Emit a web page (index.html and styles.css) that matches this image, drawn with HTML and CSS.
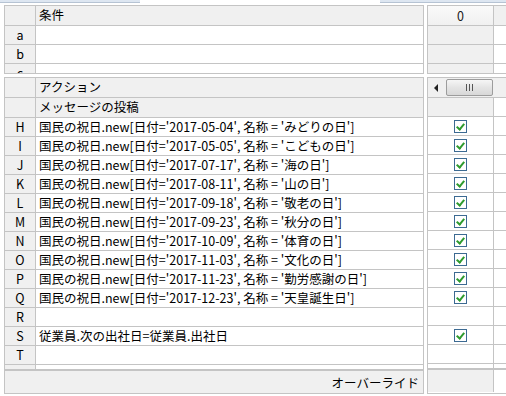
FILE: index.html
```html
<!DOCTYPE html>
<html lang="ja">

<head>
    <meta charset="UTF-8">
    <title>デシジョンテーブル</title>
    <link rel="stylesheet" href="styles.css">
</head>

<body>
    <div class="tabstrip">
        <div class="tab-left"></div>
        <div class="tab-gap"></div>
        <div class="tab-right"></div>
    </div>

    <div class="sheet">
        <!-- 条件 -->
        <div class="pane upper left">
            <div class="row head"><div class="key"></div><div class="cell">条件</div></div>
            <div class="row"><div class="key">a</div><div class="cell"></div></div>
            <div class="row"><div class="key">b</div><div class="cell"></div></div>
            <div class="row"><div class="key">c</div><div class="cell"></div></div>
        </div>
        <div class="pane upper right">
            <div class="row head"><div class="col num">0</div><div class="rest"></div></div>
            <div class="row"><div class="col grey"></div><div class="rest"></div></div>
            <div class="row"><div class="col grey"></div><div class="rest"></div></div>
            <div class="row"><div class="col grey"></div><div class="rest"></div></div>
        </div>

        <!-- アクション -->
        <div class="pane lower left">
            <div class="row head"><div class="key"></div><div class="cell">アクション</div></div>
            <div class="row head"><div class="key"></div><div class="cell">メッセージの投稿</div></div>
            <div class="row"><div class="key">H</div><div class="cell">国民の祝日.new[日付='2017-05-04', 名称 = 'みどりの日']</div></div>
            <div class="row"><div class="key">I</div><div class="cell">国民の祝日.new[日付='2017-05-05', 名称 = 'こどもの日']</div></div>
            <div class="row"><div class="key">J</div><div class="cell">国民の祝日.new[日付='2017-07-17', 名称 = '海の日']</div></div>
            <div class="row"><div class="key">K</div><div class="cell">国民の祝日.new[日付='2017-08-11', 名称 = '山の日']</div></div>
            <div class="row"><div class="key">L</div><div class="cell">国民の祝日.new[日付='2017-09-18', 名称 = '敬老の日']</div></div>
            <div class="row"><div class="key">M</div><div class="cell">国民の祝日.new[日付='2017-09-23', 名称 = '秋分の日']</div></div>
            <div class="row"><div class="key">N</div><div class="cell">国民の祝日.new[日付='2017-10-09', 名称 = '体育の日']</div></div>
            <div class="row"><div class="key">O</div><div class="cell">国民の祝日.new[日付='2017-11-03', 名称 = '文化の日']</div></div>
            <div class="row"><div class="key">P</div><div class="cell">国民の祝日.new[日付='2017-11-23', 名称 = '勤労感謝の日']</div></div>
            <div class="row"><div class="key">Q</div><div class="cell">国民の祝日.new[日付='2017-12-23', 名称 = '天皇誕生日']</div></div>
            <div class="row"><div class="key">R</div><div class="cell"></div></div>
            <div class="row"><div class="key">S</div><div class="cell">従業員.次の出社日=従業員.出社日</div></div>
            <div class="row"><div class="key">T</div><div class="cell"></div></div>
            <div class="row stub"><div class="key"></div><div class="cell"></div></div>
            <div class="footer">オーバーライド</div>
        </div>
        <div class="pane lower right">
            <div class="row scroll">
                <span class="arrow"></span>
                <span class="thumb"><span class="grip"></span></span>
            </div>
            <div class="row"><div class="col grey"></div><div class="rest"></div></div>
            <div class="row"><div class="col"><span class="check"></span></div><div class="rest"></div></div>
            <div class="row"><div class="col"><span class="check"></span></div><div class="rest"></div></div>
            <div class="row"><div class="col"><span class="check"></span></div><div class="rest"></div></div>
            <div class="row"><div class="col"><span class="check"></span></div><div class="rest"></div></div>
            <div class="row"><div class="col"><span class="check"></span></div><div class="rest"></div></div>
            <div class="row"><div class="col"><span class="check"></span></div><div class="rest"></div></div>
            <div class="row"><div class="col"><span class="check"></span></div><div class="rest"></div></div>
            <div class="row"><div class="col"><span class="check"></span></div><div class="rest"></div></div>
            <div class="row"><div class="col"><span class="check"></span></div><div class="rest"></div></div>
            <div class="row"><div class="col"><span class="check"></span></div><div class="rest"></div></div>
            <div class="row"><div class="col"></div><div class="rest"></div></div>
            <div class="row"><div class="col"><span class="check"></span></div><div class="rest"></div></div>
            <div class="row"><div class="col"></div><div class="rest"></div></div>
            <div class="row stub"><div class="col"></div><div class="rest"></div></div>
            <div class="row foot"><div class="col grey"></div><div class="rest"></div></div>
        </div>
    </div>
</body>

</html>
```

FILE: styles.css
```css
body {
    margin: 0;
    padding: 0;
    background-color: #fff;
    font-family: "Noto Sans CJK JP", "Noto Sans", sans-serif;
    font-size: 12.5px;
    color: #000;
    width: 506px;
    height: 396px;
    overflow: hidden;
}

/* thin tab strip along the top edge */
.tabstrip {
    display: flex;
    height: 3px;
    margin-bottom: 2px;
}

.tab-left {
    width: 140px;
    background-color: #dde6f1;
    border-bottom: 1px solid #b6c3d3;
    box-sizing: border-box;
}

.tab-gap {
    flex: 1;
}

.tab-right {
    width: 126px;
    background-color: #dde6f1;
    border-bottom: 1px solid #b6c3d3;
    box-sizing: border-box;
}

.sheet {
    display: grid;
    grid-template-columns: 420px 79px;
    grid-template-rows: 69px 317px;
    column-gap: 3px;
    row-gap: 3px;
    padding-left: 4px;
}

.pane {
    border: 1px solid #c4c4c4;
    overflow: hidden;
    box-sizing: border-box;
}

.pane.right {
    border-right: none;
}

.row {
    display: flex;
    height: 19px;
    border-bottom: 1px solid #c4c4c4;
    box-sizing: border-box;
}

.row.head {
    height: 20px;
    background-color: #f0f0f0;
}

.row.stub {
    height: 5px;
}

.key {
    width: 30px;
    flex-shrink: 0;
    border-right: 1px solid #c4c4c4;
    background-color: #f0f0f0;
    text-align: center;
    line-height: 18px;
}

.cell {
    flex: 1;
    padding-left: 3px;
    line-height: 18px;
    white-space: nowrap;
}

.footer {
    height: 23px;
    border-top: 1px solid #c4c4c4;
    background-color: #f0f0f0;
    text-align: right;
    padding-right: 4px;
    line-height: 23px;
}

/* right side: the single rule column */
.col {
    width: 65px;
    flex-shrink: 0;
    border-right: 1px solid #c4c4c4;
    display: flex;
    justify-content: center;
    align-items: center;
}

.col.grey {
    background-color: #f0f0f0;
}

.col.num {
    background: linear-gradient(#fafafa, #f0f0f0);
    color: #1a1a1a;
}

.rest {
    flex: 1;
}

.row.foot {
    height: 23px;
    border-top: 1px solid #c4c4c4;
    border-bottom: none;
}

/* horizontal scrollbar */
.row.scroll {
    height: 20px;
    background-color: #f0f0f0;
    align-items: center;
    padding-left: 6px;
}

.arrow {
    width: 0;
    height: 0;
    border-top: 4px solid transparent;
    border-bottom: 4px solid transparent;
    border-right: 4px solid #222;
}

.thumb {
    margin-left: 8px;
    width: 47px;
    height: 17px;
    box-sizing: border-box;
    border: 1px solid #9c9c9c;
    border-radius: 2px;
    background: linear-gradient(#f6f6f6, #e4e4e4 50%, #d8d8d8);
    display: flex;
    justify-content: center;
    align-items: center;
}

.grip {
    width: 7px;
    height: 7px;
    background: linear-gradient(90deg, #555 1px, transparent 1px, transparent 3px, #555 3px, #555 4px, transparent 4px, transparent 6px, #555 6px);
}

/* checked checkbox */
.check {
    width: 13px;
    height: 13px;
    box-sizing: border-box;
    border: 1px solid #3c6a92;
    background-color: #fff;
    position: relative;
}

.check::after {
    content: "";
    position: absolute;
    left: 3px;
    top: 1px;
    width: 3px;
    height: 6px;
    border-right: 2px solid #2e9b2e;
    border-bottom: 2px solid #2e9b2e;
    transform: rotate(40deg);
}
```
